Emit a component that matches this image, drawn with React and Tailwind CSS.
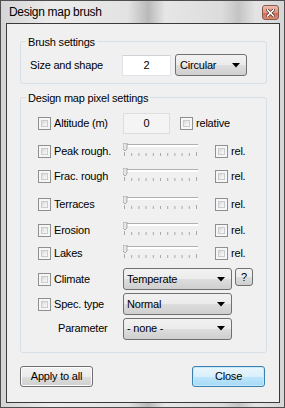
import { useState } from "react"

const Checkbox = ({ className = "" }) => (
  <div className={`w-[13px] h-[13px] shrink-0 border border-[#8e8f8f] bg-[#f6f6f6] p-[2px] ${className}`}>
    <div className="w-full h-full border border-[#c8cbcf] bg-[linear-gradient(135deg,#d9d9d9,#efefef_60%,#fafafa)]" />
  </div>
)

const Arrow = () => (
  <svg width="8" height="5" viewBox="0 0 8 5" className="shrink-0">
    <polygon points="0,0 8,0 4,4.5" fill="#000" />
  </svg>
)

const Combo = ({ value, className = "" }) => (
  <div className={`flex items-center justify-between h-[22px] pl-[3px] pr-[6px] rounded-[3px] border border-[#707070] bg-[linear-gradient(#f2f2f2,#ebebeb_50%,#dddddd_51%,#cfcfcf)] ${className}`}>
    <span>{value}</span>
    <Arrow />
  </div>
)

const Slider = () => (
  <svg width="76" height="14" viewBox="0 0 76 14" className="shrink-0">
    <rect x="1" y="1" width="74" height="1" fill="#b0b0b0" />
    <rect x="1" y="2" width="74" height="2" fill="#ffffff" />
    <rect x="1" y="1" width="1" height="3" fill="#b0b0b0" />
    <polygon points="0,0 4,0 4,6 2,8 0,6" fill="#e6e6e6" stroke="#9a9a9a" strokeWidth="0.8" />
    {[0, 1, 2, 3, 4, 5, 6, 7, 8, 9, 10].map(i => (
      <rect key={i} x={1 + i * 7.2} y={i === 0 || i === 10 ? 9 : 10} width="1" height={i === 0 || i === 10 ? 4 : 3} fill="#a8a8a8" />
    ))}
  </svg>
)

const Button = ({ children, primary }) => (
  <div className={`w-[73px] h-[21px] flex items-center justify-center rounded-[3px] border ${primary ? "border-[#3c7fb1] bg-[linear-gradient(#eaf6fd,#d9f0fc_50%,#bee6fd_51%,#a7d9f5)] shadow-[inset_0_0_0_1px_#c6e8fb]" : "border-[#707070] bg-[linear-gradient(#f2f2f2,#ebebeb_50%,#dddddd_51%,#cfcfcf)] shadow-[inset_0_0_0_1px_#fcfcfc]"}`}>
    {children}
  </div>
)

const sliderRows = [
  { label: "Peak rough.", mt: "mt-[7px]" },
  { label: "Frac. rough", mt: "mt-[5px]" },
  { label: "Terraces", mt: "mt-[8px]" },
  { label: "Erosion", mt: "mt-[6px]" },
  { label: "Lakes", mt: "mt-[3px]" },
]

export default function App() {
  const [size] = useState(2)

  return (
    <div className="w-[285px] h-[408px] flex flex-col border border-[#4e4e4e] bg-[linear-gradient(to_right,#d4d4d4,#ececec_18%,#e2e2e2_45%,#b9b9b9_52%,#e6e6e6_58%,#dcdcdc_78%,#c4c4c4_84%,#e4e4e4_90%,#d6d6d6)] text-[11px] tracking-[-0.2px] text-black font-['Liberation_Sans',Arial,sans-serif] overflow-hidden">
      {/* title bar */}
      <div className="h-[22px] flex items-center justify-between pl-[8px] pr-[5px]">
        <span className="text-[12px] tracking-[-0.3px] text-[#000]">Design map brush</span>
        <div className="w-[17px] h-[15px] mt-[1px] rounded-[3px] border border-[#8a5a50] bg-[linear-gradient(#efbcae,#e09580_50%,#d06a52_51%,#dc8a70)] flex items-center justify-center">
          <svg width="9" height="8" viewBox="0 0 9 8">
            <path d="M1.5 1 L7.5 7 M7.5 1 L1.5 7" stroke="#4a2a25" strokeWidth="3" strokeLinecap="square" />
            <path d="M1.5 1 L7.5 7 M7.5 1 L1.5 7" stroke="#ffffff" strokeWidth="1.6" strokeLinecap="square" />
          </svg>
        </div>
      </div>

      {/* client area */}
      <div className="flex-1 ml-[5px] mr-[4px] mb-[4px] border border-[#3a3a3a] bg-[#f0f0f0] pl-[13px] pr-[12px]">
        {/* brush settings */}
        <div className="relative mt-[17px] h-[43px] rounded-[3px] border border-[#d5dfe5] pl-[9px] pt-[12px]">
          <span className="absolute -top-[8px] left-[5px] px-[2px] bg-[#f0f0f0]">Brush settings</span>
          <div className="flex items-center">
            <span className="w-[92px]">Size and shape</span>
            <div className="w-[49px] h-[21px] flex items-center justify-center bg-white border border-[#e2e3ea] border-t-[#d0d2d8]">{size}</div>
            <Combo value="Circular" className="ml-[4px] w-[72px] pl-[4px]" />
          </div>
        </div>

        {/* design map pixel settings */}
        <div className="relative mt-[13px] h-[256px] rounded-[3px] border border-[#d5dfe5] pl-[17px] pt-[15px]">
          <span className="absolute -top-[8px] left-[5px] px-[2px] bg-[#f0f0f0]">Design map pixel settings</span>

          <div className="flex items-center h-[21px]">
            <div className="w-[85px] flex items-center">
              <Checkbox />
              <span className="ml-[3px]">Altitude (m)</span>
            </div>
            <div className="w-[47px] h-[21px] flex items-center justify-center border border-[#dadde2] bg-[#f4f4f4]">0</div>
            <Checkbox className="ml-[10px]" />
            <span className="ml-[3px]">relative</span>
          </div>

          {sliderRows.map(row => (
            <div key={row.label} className={`flex items-center h-[20px] ${row.mt}`}>
              <div className="w-[85px] flex items-center">
                <Checkbox />
                <span className="ml-[3px]">{row.label}</span>
              </div>
              <div className="self-start mt-[2px]">
                <Slider />
              </div>
              <Checkbox className="ml-[16px]" />
              <span className="ml-[3px]">rel.</span>
            </div>
          ))}

          <div className="flex items-center h-[22px] mt-[5px]">
            <div className="w-[85px] flex items-center">
              <Checkbox />
              <span className="ml-[3px]">Climate</span>
            </div>
            <Combo value="Temperate" className="w-[109px]" />
            <div className="ml-[3px] self-start w-[18px] h-[18px] flex items-center justify-center rounded-[3px] border border-[#707070] bg-[linear-gradient(#f2f2f2,#ebebeb_50%,#dddddd_51%,#cfcfcf)]">?</div>
          </div>

          <div className="flex items-center h-[22px] mt-[3px]">
            <div className="w-[85px] flex items-center">
              <Checkbox />
              <span className="ml-[3px]">Spec. type</span>
            </div>
            <Combo value="Normal" className="w-[109px] pl-[2px]" />
          </div>

          <div className="flex items-center h-[21px] mt-[3px]">
            <div className="w-[85px] pl-[20px]">Parameter</div>
            <Combo value="- none -" className="w-[109px] h-[21px] pl-[2px]" />
          </div>
        </div>

        {/* buttons */}
        <div className="flex justify-between mt-[13px] pr-[2px]">
          <Button>Apply to all</Button>
          <Button primary>Close</Button>
        </div>
      </div>
    </div>
  )
}
